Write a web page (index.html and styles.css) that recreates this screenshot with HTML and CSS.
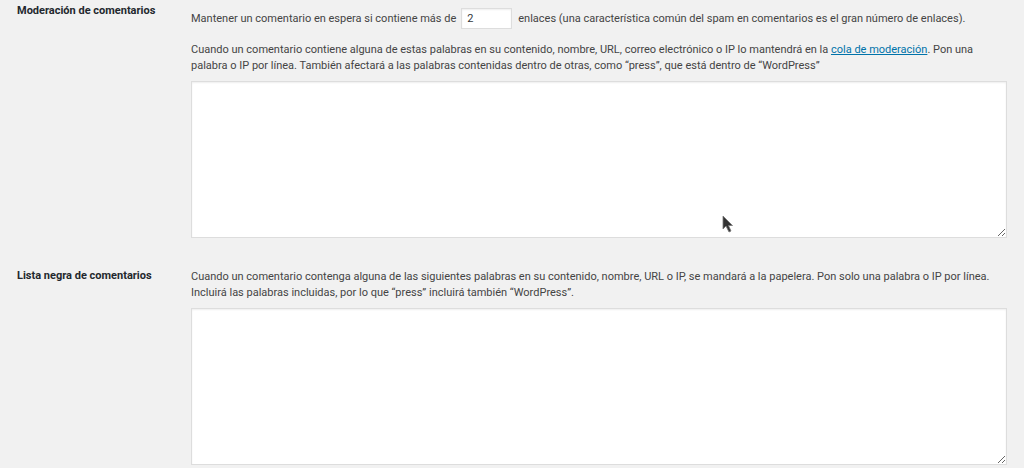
FILE: index.html
```html
<!DOCTYPE html>
<html lang="es">
<head>
<meta charset="utf-8">
<title>Comentarios</title>
<link rel="stylesheet" href="styles.css">
</head>
<body>
<div class="settings">
  <div class="row row-first">
    <div class="label">Moderación de comentarios</div>
    <div class="field">
      <div class="inline-line">
        <span>Mantener un comentario en espera si contiene más de</span>
        <input class="small-input" type="text" value="2">
        <span>enlaces (una característica común del spam en comentarios es el gran número de enlaces).</span>
      </div>
      <p class="desc">Cuando un comentario contiene alguna de estas palabras en su contenido, nombre, URL, correo electrónico o IP lo mantendrá en la <a href="#">cola de moderación</a>. Pon una palabra o IP por línea. También afectará a las palabras contenidas dentro de otras, como “press”, que está dentro de “WordPress”</p>
      <div class="area-wrap">
        <textarea class="area"></textarea>
        <svg class="cursor" width="12" height="18" viewBox="0 0 12 18"><path d="M1 1 L1 14 L4 11 L7 17 L9 16 L6.5 10.5 L10.5 10.5 Z" fill="#333" stroke="#777" stroke-width="0.8"/></svg>
      </div>
    </div>
  </div>
  <div class="row row-second">
    <div class="label">Lista negra de comentarios</div>
    <div class="field">
      <p class="desc">Cuando un comentario contenga alguna de las siguientes palabras en su contenido, nombre, URL o IP, se mandará a la papelera. Pon solo una palabra o IP por línea. Incluirá las palabras incluidas, por lo que “press” incluirá también “WordPress”.</p>
      <div class="area-wrap">
        <textarea class="area"></textarea>
      </div>
    </div>
  </div>
</div>
</body>
</html>
```

FILE: styles.css
```css
html, body {
  margin: 0;
  padding: 0;
  background: #f1f1f1;
}
body {
  font-family: Roboto, "Liberation Sans", Arial, sans-serif;
  font-size: 11px;
  line-height: 16px;
  color: #444;
  height: 468px;
  overflow: hidden;
}
.settings {
  display: flex;
  flex-direction: column;
}
.row {
  display: grid;
  grid-template-columns: 191px 816px;
}
.label {
  font-weight: bold;
  color: #23282d;
  padding-left: 17px;
}
.row-first .label { padding-top: 3px; }
.row-first .field { padding-top: 8px; }
.row-second { margin-top: 31px; }
.row-second .label { margin-top: -1px; }
.inline-line {
  display: flex;
  align-items: center;
  height: 21px;
  white-space: nowrap;
}
.small-input {
  box-sizing: border-box;
  width: 51px;
  height: 21px;
  margin: 0 6px 0 5px;
  padding: 0 5px;
  border: 1px solid #ddd;
  box-shadow: inset 0 1px 2px rgba(0,0,0,.07);
  background: #fff;
  font: 11px Roboto, "Liberation Sans", Arial, sans-serif;
  color: #32373c;
  border-radius: 0;
  outline: none;
}
.desc {
  margin: 13px 0 7px;
}
.row-second .desc { margin-top: 0; }
.desc a {
  color: #0073aa;
  text-decoration: underline;
}
.area-wrap {
  position: relative;
  height: 157px;
}
.area {
  display: block;
  box-sizing: border-box;
  width: 816px;
  height: 157px;
  margin: 0;
  border: 1px solid #ddd;
  box-shadow: inset 0 1px 2px rgba(0,0,0,.07);
  background: #fff;
  border-radius: 0;
  resize: both;
  outline: none;
}
.cursor {
  position: absolute;
  left: 531px;
  top: 134px;
}
```
